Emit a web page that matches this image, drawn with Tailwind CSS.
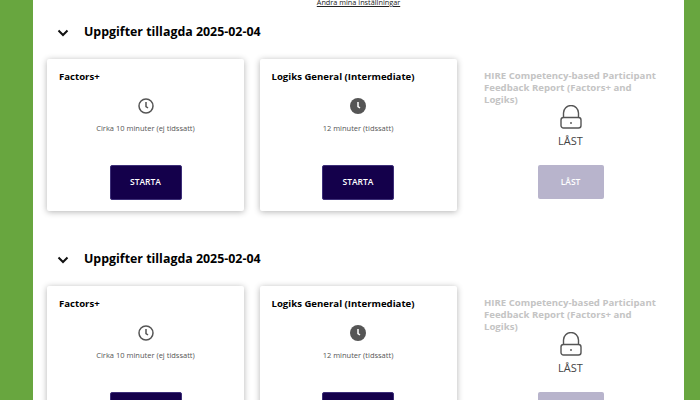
<!DOCTYPE html>
<html lang="sv">
<head>
  <meta charset="UTF-8" />
  <title>Uppgifter</title>
  <script src="https://cdn.jsdelivr.net/npm/@tailwindcss/browser@4"></script>
</head>
<body class="h-[400px] overflow-hidden bg-[#68a63f] font-['Open_Sans',sans-serif]">
  <main class="ml-[33px] w-[651px] h-[400px] overflow-hidden bg-white px-[14px]">
    <p class="h-[7px] mt-[-3px] text-center text-[7.3px] leading-[10px] text-[#222] underline">Ändra mina inställningar</p>

    <!-- section 1 -->
    <section class="h-[227px] pt-[18px]">
      <div class="flex items-center h-[21px] mb-[16px] pl-[10px]">
        <svg class="w-[12px] h-[8px] mr-[15px]" viewBox="0 0 12 8" fill="none" stroke="#111" stroke-width="2"><path d="M1.5 1.5 6 6l4.5-4.5" /></svg>
        <h2 class="text-[12.4px] font-bold text-black">Uppgifter tillagda 2025-02-04</h2>
      </div>
      <div class="grid grid-cols-[197px_197px_197px] gap-x-[15.5px]">
        <div class="h-[152px] rounded-[2px] bg-white shadow-[0_1px_6px_rgba(0,0,0,0.3)] pt-[11px] px-[12px] flex flex-col items-center">
          <h3 class="self-start text-[9.6px] leading-[13px] font-bold text-black">Factors+</h3>
          <svg class="mt-[15px] w-[16px] h-[16px]" viewBox="0 0 16 16" fill="none" stroke="#555" stroke-width="1.5"><circle cx="8" cy="8" r="7" /><path d="M8 4v4.5l2 1.5" /></svg>
          <p class="mt-[8px] text-[7.5px] leading-[12px] text-[#555]">Cirka 10 minuter (ej tidssatt)</p>
          <button class="mt-[31px] w-[72px] h-[35px] rounded-[2px] bg-[#14004b] border border-[#3d2f78] text-[8.5px] font-semibold text-white">STARTA</button>
        </div>
        <div class="h-[152px] rounded-[2px] bg-white shadow-[0_1px_6px_rgba(0,0,0,0.3)] pt-[11px] px-[12px] flex flex-col items-center">
          <h3 class="self-start text-[9.6px] leading-[13px] font-bold text-black">Logiks General (Intermediate)</h3>
          <svg class="mt-[15px] w-[16px] h-[16px]" viewBox="0 0 16 16"><circle cx="8" cy="8" r="8" fill="#555" /><path d="M8 4v4.5l2 1.5" fill="none" stroke="#fff" stroke-width="1.5" /></svg>
          <p class="mt-[8px] text-[7.5px] leading-[12px] text-[#555]">12 minuter (tidssatt)</p>
          <button class="mt-[31px] w-[72px] h-[35px] rounded-[2px] bg-[#14004b] border border-[#3d2f78] text-[8.5px] font-semibold text-white">STARTA</button>
        </div>
        <div class="h-[152px] pt-[11px] px-[12px] flex flex-col items-center">
          <h3 class="self-start text-[9.6px] leading-[12px] font-bold text-[#c4c4c4]">HIRE Competency-based Participant Feedback Report (Factors+ and Logiks)</h3>
          <svg class="mt-[-1px] w-[22px] h-[24px]" viewBox="0 0 22 24" fill="none" stroke="#555" stroke-width="1.4"><rect x="1" y="12.5" width="20" height="10.5" rx="2.5" /><path d="M3.5 12.5V8a7.5 7.5 0 0 1 15 0v4.5" /><path d="M11 17v2" /></svg>
          <p class="mt-[4px] text-[11px] leading-[15px] text-[#444]">LÅST</p>
          <button class="mt-[17px] w-[66px] h-[34px] rounded-[2px] bg-[#b8b4cc] text-[8.5px] font-semibold text-white">LÅST</button>
        </div>
      </div>
    </section>

    <!-- section 2 -->
    <section class="h-[227px] pt-[18px]">
      <div class="flex items-center h-[21px] mb-[16px] pl-[10px]">
        <svg class="w-[12px] h-[8px] mr-[15px]" viewBox="0 0 12 8" fill="none" stroke="#111" stroke-width="2"><path d="M1.5 1.5 6 6l4.5-4.5" /></svg>
        <h2 class="text-[12.4px] font-bold text-black">Uppgifter tillagda 2025-02-04</h2>
      </div>
      <div class="grid grid-cols-[197px_197px_197px] gap-x-[15.5px]">
        <div class="h-[152px] rounded-[2px] bg-white shadow-[0_1px_6px_rgba(0,0,0,0.3)] pt-[11px] px-[12px] flex flex-col items-center">
          <h3 class="self-start text-[9.6px] leading-[13px] font-bold text-black">Factors+</h3>
          <svg class="mt-[15px] w-[16px] h-[16px]" viewBox="0 0 16 16" fill="none" stroke="#555" stroke-width="1.5"><circle cx="8" cy="8" r="7" /><path d="M8 4v4.5l2 1.5" /></svg>
          <p class="mt-[8px] text-[7.5px] leading-[12px] text-[#555]">Cirka 10 minuter (ej tidssatt)</p>
          <button class="mt-[31px] w-[72px] h-[35px] rounded-[2px] bg-[#14004b] border border-[#3d2f78] text-[8.5px] font-semibold text-white">STARTA</button>
        </div>
        <div class="h-[152px] rounded-[2px] bg-white shadow-[0_1px_6px_rgba(0,0,0,0.3)] pt-[11px] px-[12px] flex flex-col items-center">
          <h3 class="self-start text-[9.6px] leading-[13px] font-bold text-black">Logiks General (Intermediate)</h3>
          <svg class="mt-[15px] w-[16px] h-[16px]" viewBox="0 0 16 16"><circle cx="8" cy="8" r="8" fill="#555" /><path d="M8 4v4.5l2 1.5" fill="none" stroke="#fff" stroke-width="1.5" /></svg>
          <p class="mt-[8px] text-[7.5px] leading-[12px] text-[#555]">12 minuter (tidssatt)</p>
          <button class="mt-[31px] w-[72px] h-[35px] rounded-[2px] bg-[#14004b] border border-[#3d2f78] text-[8.5px] font-semibold text-white">STARTA</button>
        </div>
        <div class="h-[152px] pt-[11px] px-[12px] flex flex-col items-center">
          <h3 class="self-start text-[9.6px] leading-[12px] font-bold text-[#c4c4c4]">HIRE Competency-based Participant Feedback Report (Factors+ and Logiks)</h3>
          <svg class="mt-[-1px] w-[22px] h-[24px]" viewBox="0 0 22 24" fill="none" stroke="#555" stroke-width="1.4"><rect x="1" y="12.5" width="20" height="10.5" rx="2.5" /><path d="M3.5 12.5V8a7.5 7.5 0 0 1 15 0v4.5" /><path d="M11 17v2" /></svg>
          <p class="mt-[4px] text-[11px] leading-[15px] text-[#444]">LÅST</p>
          <button class="mt-[17px] w-[66px] h-[34px] rounded-[2px] bg-[#b8b4cc] text-[8.5px] font-semibold text-white">LÅST</button>
        </div>
      </div>
    </section>
  </main>
</body>
</html>
